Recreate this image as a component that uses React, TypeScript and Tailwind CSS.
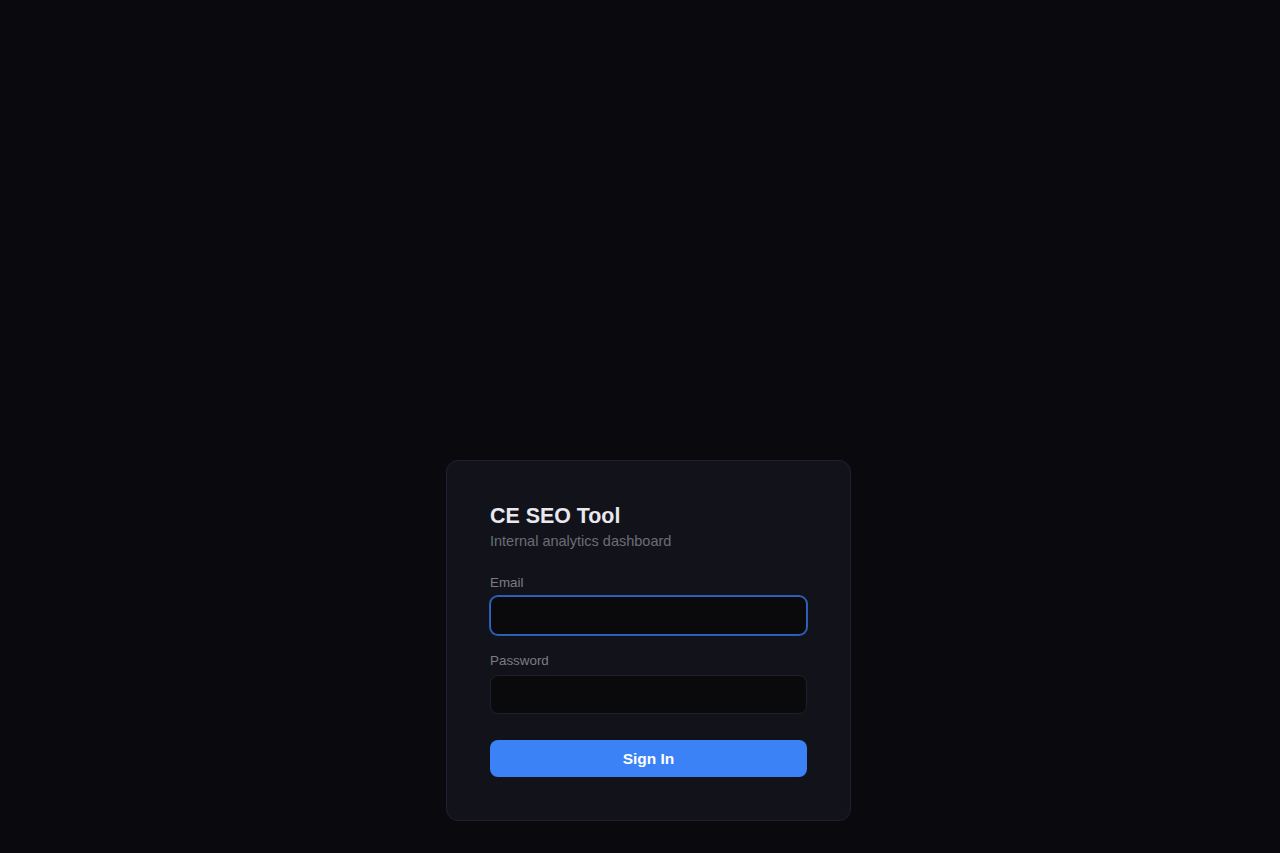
import React from "react";

export default function App() {
  return (
    <div
      className="min-h-screen w-full bg-[#0a0a0e] pt-[460px] pl-[446px]"
      style={{ fontFamily: '"Liberation Sans", Arial, sans-serif' }}
    >
      <div className="w-[405px] rounded-xl border border-[#1f2030] bg-[#12131a] px-[43px] pt-[41px] pb-[43px]">
        <h1 className="text-[21.4px] font-bold leading-[28px] text-[#e8e8ee]">CE SEO Tool</h1>
        <p className="mt-[1px] text-[14.5px] leading-[20px] text-[#6b6d78]">Internal analytics dashboard</p>

        <form className="mt-[22px] flex flex-col" onSubmit={(e) => e.preventDefault()}>
          <label className="block text-[13.4px] leading-[20px] text-[#7a7c87]">Email</label>
          <input
            type="email"
            autoFocus
            className="mt-[3px] h-[39px] w-full rounded-lg border border-[#2f63c0] bg-[#0a0a0d] px-3 text-[14px] text-[#e8e8ee] outline-none ring-1 ring-[#2b5cb4]"
          />
          <label className="mt-[16px] block text-[13.4px] leading-[20px] text-[#7a7c87]">Password</label>
          <input
            type="password"
            className="mt-[4px] h-[39px] w-full rounded-lg border border-[#1e1f2a] bg-[#0a0a0d] px-3 text-[14px] text-[#e8e8ee] outline-none"
          />
          <button
            type="submit"
            className="mt-[26px] h-[37px] w-full rounded-lg bg-[#3b82f6] text-[15.5px] font-bold text-white"
          >
            Sign In
          </button>
        </form>
      </div>
    </div>
  );
}
